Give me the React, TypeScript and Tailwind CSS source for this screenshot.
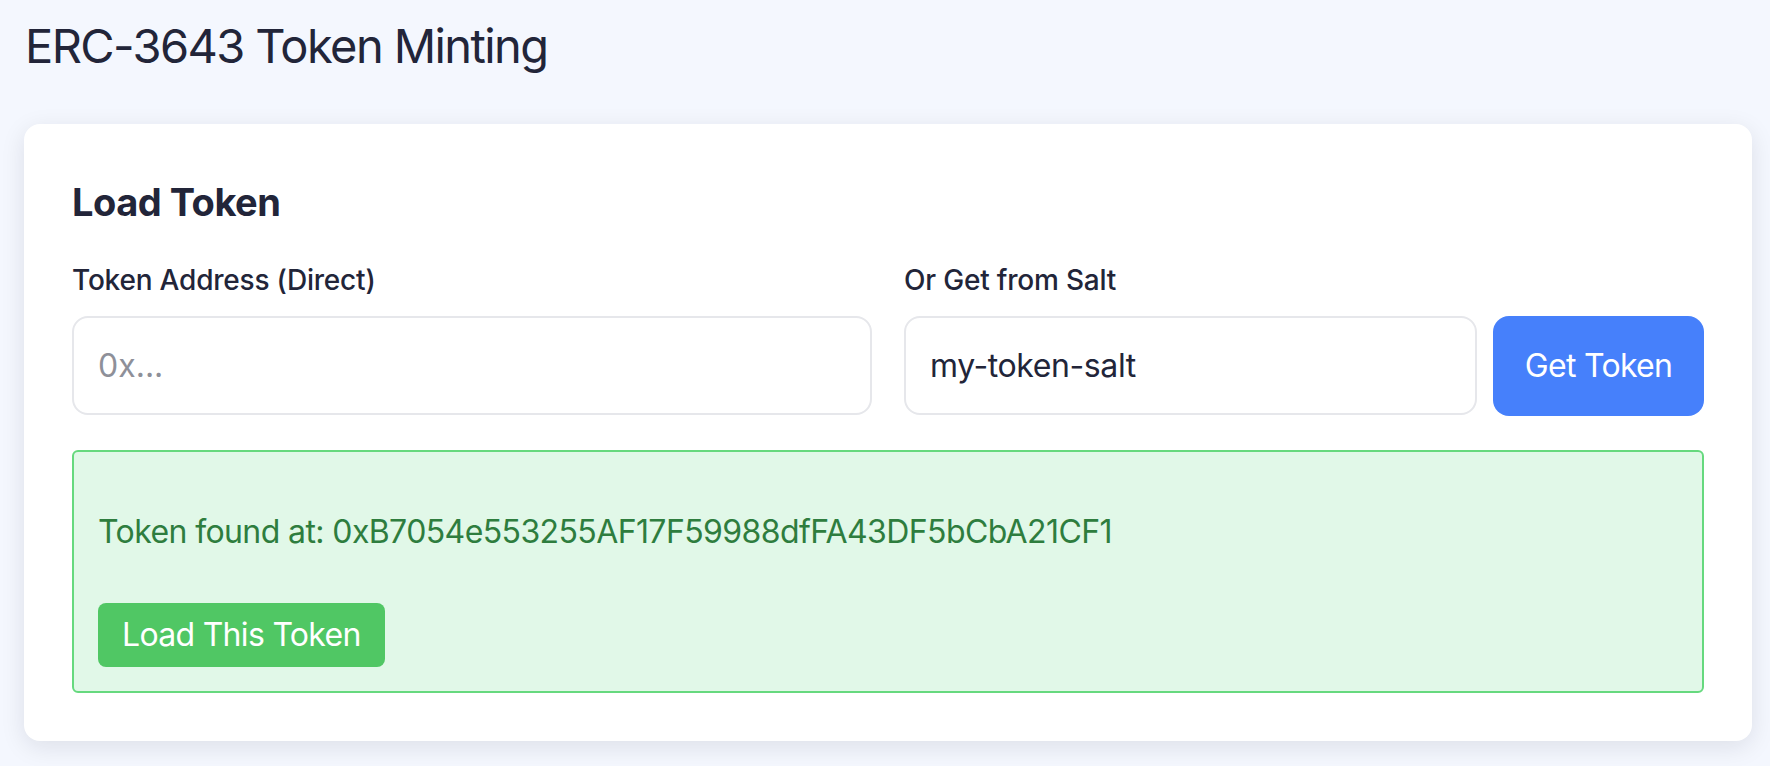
const App = () => {
  return (
    <div className="min-h-screen bg-[#f4f7fe] pl-6 pr-[18px] pt-[10px] pb-6 font-[Inter,sans-serif] text-[#222539]">
      <h1 className="pl-[1px] text-[47px] leading-[72px] font-normal tracking-[-1.6px]">ERC-3643 Token Minting</h1>

      <section className="mt-[42px] rounded-2xl bg-white p-12 shadow-[0_6px_24px_rgba(15,23,42,0.10)]">
        <h2 className="text-[38px] leading-[60px] font-bold tracking-[-0.5px]">Load Token</h2>

        <div className="mt-[27px] grid grid-cols-2 gap-8">
          <div className="flex flex-col">
            <label className="text-[28px] leading-[42px] font-medium tracking-[-0.2px]">Token Address (Direct)</label>
            <input
              className="mt-[15px] h-[99px] rounded-2xl border-2 border-[#e6e7eb] bg-white px-6 text-[32px] outline-none placeholder:text-[#8e9099]"
              placeholder="0x..."
            />
          </div>

          <div className="flex flex-col">
            <label className="text-[28px] leading-[42px] font-medium tracking-[-0.2px]">Or Get from Salt</label>
            <div className="mt-[15px] flex gap-4">
              <input
                className="h-[99px] min-w-0 flex-1 rounded-2xl border-2 border-[#e6e7eb] bg-white px-6 text-[32px] tracking-[-0.4px] outline-none"
                defaultValue="my-token-salt"
              />
              <button className="h-[100px] w-[211px] rounded-2xl bg-[#4680fb] text-[32px] tracking-[-0.7px] text-white">
                Get Token
              </button>
            </div>
          </div>
        </div>

        <div className="mt-[34px] rounded-[6px] border-2 border-[#66d97e] bg-[#e1f8e8] px-6 pt-[56px] pb-6">
          <p className="text-[32px] leading-[48px] tracking-[-0.6px] text-[#2e7d3e]">
            Token found at: 0xB7054e553255AF17F59988dfFA43DF5bCbA21CF1
          </p>
          <button className="mt-[47px] h-16 rounded-lg bg-[#50c764] px-6 text-[32px] tracking-[-0.7px] text-white">
            Load This Token
          </button>
        </div>
      </section>
    </div>
  );
};

export default App;
